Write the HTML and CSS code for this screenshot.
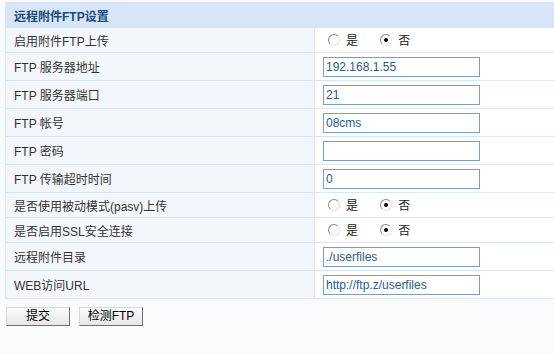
FILE: index.html
```html
<!DOCTYPE html>
<html lang="zh-CN">
<head>
    <meta charset="UTF-8">
    <title>远程附件FTP设置</title>
    <link rel="stylesheet" href="styles.css">
</head>
<body>

<form class="settings">
    <table class="form-table">
        <thead>
            <tr>
                <th colspan="2">远程附件FTP设置</th>
            </tr>
        </thead>
        <tbody>
            <tr class="row-radio">
                <td class="label">启用附件FTP上传</td>
                <td class="field">
                    <label class="choice"><input type="radio" name="ftp_on"> 是</label>
                    <label class="choice"><input type="radio" name="ftp_on" checked> 否</label>
                </td>
            </tr>
            <tr>
                <td class="label">FTP 服务器地址</td>
                <td class="field"><input type="text" class="text" value="192.168.1.55"></td>
            </tr>
            <tr>
                <td class="label">FTP 服务器端口</td>
                <td class="field"><input type="text" class="text" value="21"></td>
            </tr>
            <tr>
                <td class="label">FTP 帐号</td>
                <td class="field"><input type="text" class="text" value="08cms"></td>
            </tr>
            <tr>
                <td class="label">FTP 密码</td>
                <td class="field"><input type="password" class="text" value=""></td>
            </tr>
            <tr>
                <td class="label">FTP 传输超时时间</td>
                <td class="field"><input type="text" class="text" value="0"></td>
            </tr>
            <tr class="row-radio">
                <td class="label">是否使用被动模式(pasv)上传</td>
                <td class="field">
                    <label class="choice"><input type="radio" name="pasv"> 是</label>
                    <label class="choice"><input type="radio" name="pasv" checked> 否</label>
                </td>
            </tr>
            <tr class="row-radio">
                <td class="label">是否启用SSL安全连接</td>
                <td class="field">
                    <label class="choice"><input type="radio" name="ssl"> 是</label>
                    <label class="choice"><input type="radio" name="ssl" checked> 否</label>
                </td>
            </tr>
            <tr>
                <td class="label">远程附件目录</td>
                <td class="field"><input type="text" class="text" value="./userfiles"></td>
            </tr>
            <tr>
                <td class="label">WEB访问URL</td>
                <td class="field"><input type="text" class="text" value="http://ftp.z/userfiles"></td>
            </tr>
        </tbody>
    </table>

    <div class="actions">
        <button type="button" class="btn">提交</button>
        <button type="button" class="btn">检测FTP</button>
    </div>
</form>

</body>
</html>
```

FILE: styles.css
```css
body {
    margin: 0;
    padding: 2px 0 0 5px;
    background-color: #fafbfd;
    font-family: "Liberation Sans", Arial, "Noto Sans CJK SC", sans-serif;
    font-size: 12px;
    color: #333;
}
.form-table {
    width: 100%;
    border-collapse: collapse;
    border-left: 1px solid #d9e6f2;
}
.form-table th {
    height: 26px;
    padding: 0 0 0 8px;
    text-align: left;
    background-color: #d6e6f6;
    color: #1d4a78;
    font-weight: bold;
    font-size: 12px;
}
.form-table td {
    height: 27px;
    padding: 0;
    border-bottom: 1px solid #d9e6f2;
}
.form-table .row-radio td {
    height: 24px;
}
.label {
    width: 300px;
    padding-left: 8px !important;
    background-color: #f3f7fb;
    border-right: 1px solid #d9e6f2;
}
.field {
    padding-left: 8px !important;
    background-color: #fff;
}
.text {
    box-sizing: border-box;
    width: 157px;
    height: 20px;
    margin: 0;
    padding: 0 2px;
    border: 1px solid #7f9db9;
    background: #fff;
    color: #2c5b8a;
    font-family: "Liberation Sans", Arial, sans-serif;
    font-size: 12px;
    vertical-align: middle;
}
.choice {
    display: inline-flex;
    align-items: center;
    gap: 6px;
    margin-left: 5px;
    margin-right: 14px;
    font-family: "Noto Sans CJK SC", sans-serif;
    color: #222;
}
.choice input {
    appearance: none;
    -webkit-appearance: none;
    box-sizing: border-box;
    width: 12px;
    height: 12px;
    margin: 0;
    border-radius: 50%;
    border: 1px solid;
    border-color: #8a8a8a #e2e2e2 #e2e2e2 #8a8a8a;
    background: #fff;
    position: relative;
}
.choice input:checked::after {
    content: "";
    position: absolute;
    left: 3px;
    top: 3px;
    width: 4px;
    height: 4px;
    border-radius: 50%;
    background: #000;
}
.actions {
    display: flex;
    gap: 9px;
    margin-top: 8px;
    padding-left: 1px;
}
.btn {
    width: 64px;
    height: 19px;
    padding: 0;
    border: 1px solid;
    border-color: #d8d8d8 #707070 #707070 #d8d8d8;
    background: linear-gradient(#fbfbfb, #e6e6e6);
    color: #000;
    font-family: "Liberation Sans", Arial, "Noto Sans CJK SC", sans-serif;
    font-size: 12px;
    line-height: 17px;
    cursor: pointer;
}
```
